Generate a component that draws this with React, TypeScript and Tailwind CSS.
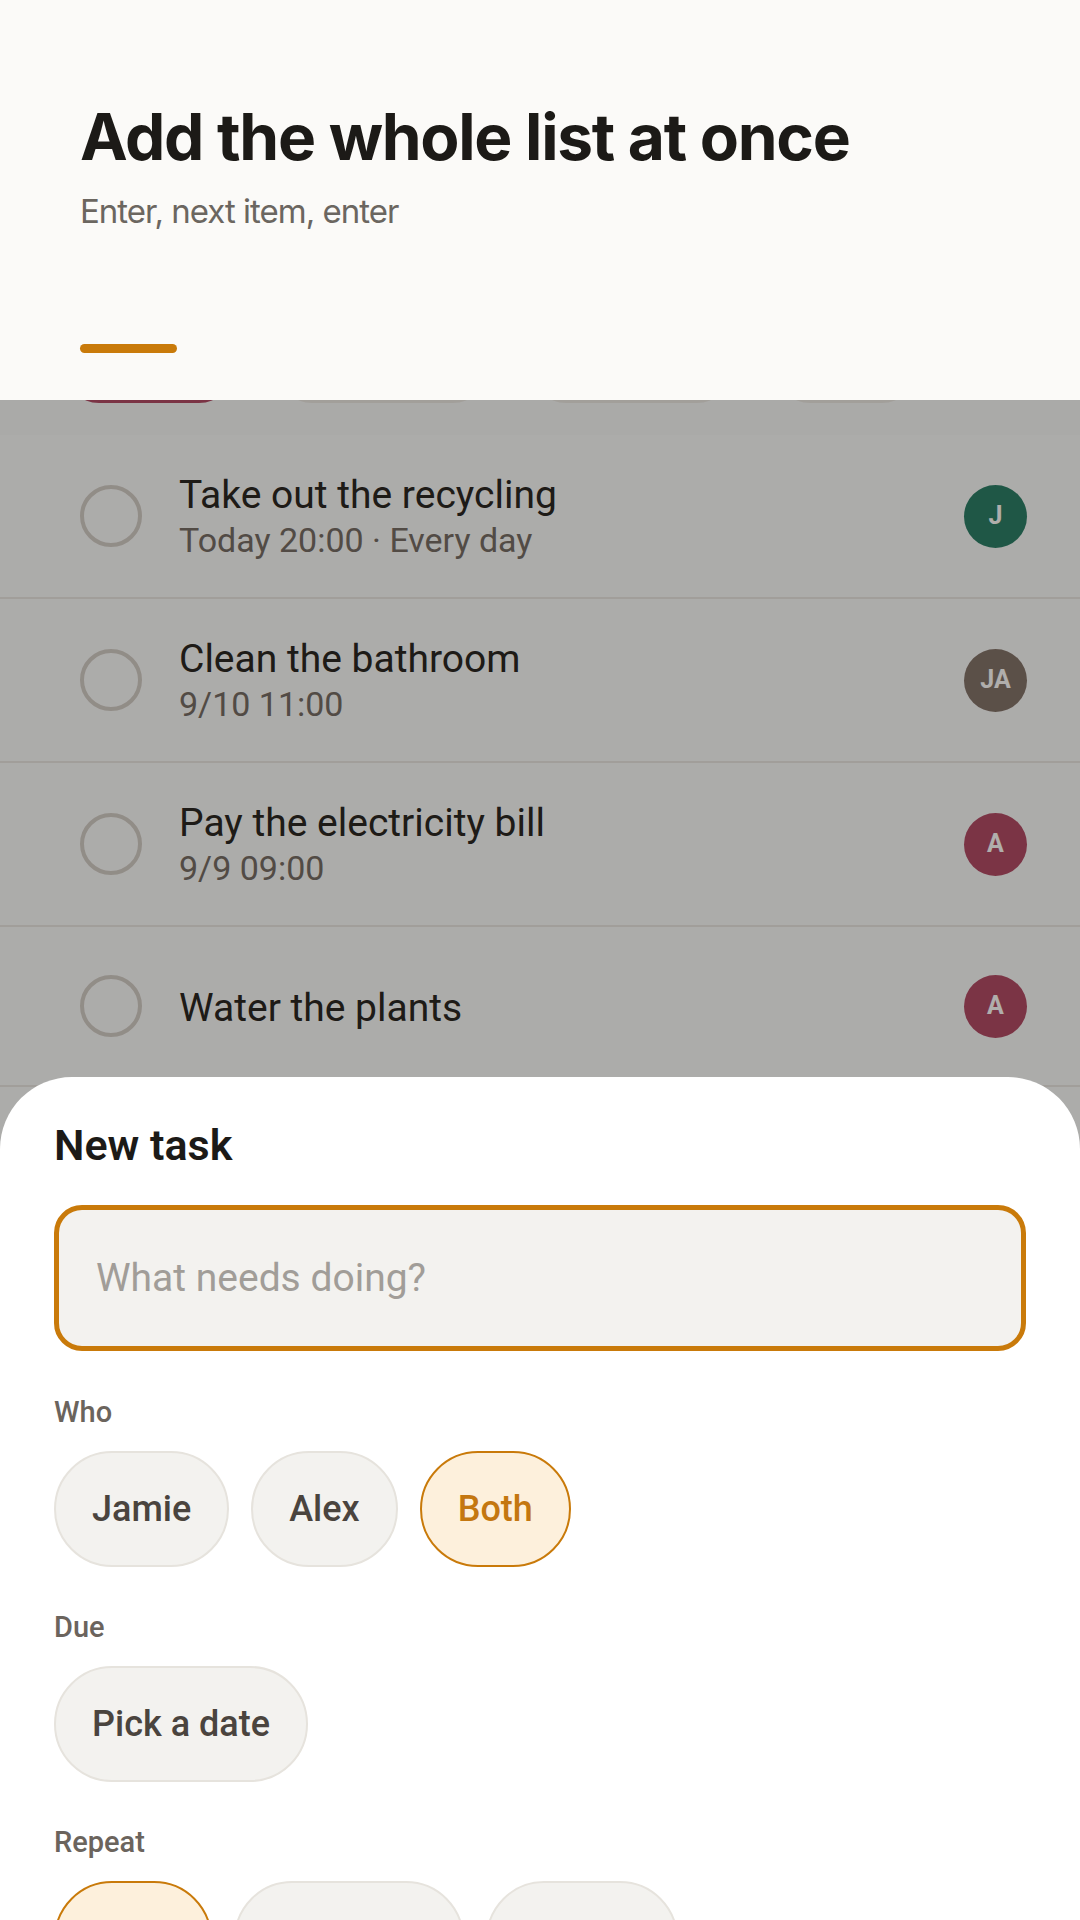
import React from "react";

interface Task {
  id: number;
  title: string;
  meta?: string;
  who: string;
  avatar: string;
}

const tasks: Task[] = [
  { id: 1, title: "Take out the recycling", meta: "Today 20:00 · Every day", who: "J", avatar: "bg-[#2e7f66]" },
  { id: 2, title: "Clean the bathroom", meta: "9/10 11:00", who: "JA", avatar: "bg-[#857469]" },
  { id: 3, title: "Pay the electricity bill", meta: "9/9 09:00", who: "A", avatar: "bg-[#b34c64]" },
  { id: 4, title: "Water the plants", who: "A", avatar: "bg-[#b34c64]" },
];

const filters = [
  { label: "All", cls: "w-[168px] bg-[#b34c64]" },
  { label: "Jamie", cls: "w-[209px] bg-[#ebe7e0]" },
  { label: "Alex", cls: "w-[199px] bg-[#ebe7e0]" },
  { label: "Done", cls: "w-[140px] bg-[#ebe7e0]" },
];

// opciones de repetir: quedan bajo el borde de la pantalla, solo se ve la parte de arriba
const repeatOptions = [
  { label: "None", cls: "w-[158px]", selected: true },
  { label: "Every day", cls: "w-[230px]", selected: false },
  { label: "Weekly", cls: "w-[192px]", selected: false },
];

function Chip({ label, selected }: { label: string; selected?: boolean }) {
  return (
    <button
      className={
        selected
          ? "h-[116px] px-[36px] rounded-full border-2 border-[#c97a0a] bg-[#fdf0dc] text-[#c47710] text-[36px] font-medium leading-none"
          : "h-[116px] px-[36px] rounded-full border-2 border-[#e6e3dd] bg-[#f3f2ef] text-[#4a443e] text-[36px] font-medium leading-none"
      }
    >
      {label}
    </button>
  );
}

function Section({ label, children }: { label: string; children: React.ReactNode }) {
  return (
    <div className="flex flex-col gap-[21px]">
      <div className="text-[29px] leading-[36px] font-medium text-[#6b645d]">{label}</div>
      <div className="flex gap-[22px]">{children}</div>
    </div>
  );
}

export default function App() {
  return (
    <div className="relative w-[1080px] h-[1920px] overflow-hidden bg-[#faf9f7] font-['Roboto',sans-serif]">
      {/* contenido de fondo */}
      <div className="h-[435px] flex items-end gap-[45px] pl-[65px] pb-[32px] bg-[#f7f6f4]">
        {filters.map((f) => (
          <div key={f.label} className={`h-[68px] rounded-full ${f.cls}`} />
        ))}
      </div>
      <div className="flex flex-col">
        {tasks.map((t) => (
          <div
            key={t.id}
            className={`${t.meta ? "h-[164px]" : "h-[160px]"} flex items-center pl-[80px] pr-[53px] border-b-2 border-[#e9e5df]`}
          >
            <div className="w-[62px] h-[62px] rounded-full border-[4px] border-[#d3ccc4] shrink-0" />
            <div className="flex-1 ml-[37px] pt-[4px] flex flex-col">
              <span className="text-[39px] leading-[43px] text-[#2c2822]">{t.title}</span>
              {t.meta && <span className="text-[34px] leading-[46px] text-[#776d64]">{t.meta}</span>}
            </div>
            <div
              className={`w-[63px] h-[63px] rounded-full ${t.avatar} flex items-center justify-center text-[#fffdf9] text-[25px] font-bold`}
            >
              {t.who}
            </div>
          </div>
        ))}
      </div>

      {/* scrim */}
      <div className="absolute inset-0 bg-black/[0.31]" />

      {/* tip del onboarding */}
      <div className="absolute top-0 left-0 right-0 h-[400px] bg-[#fbfaf8] pl-[80px] pt-[105px] font-['Inter',sans-serif]">
        <h1 className="text-[64px] leading-[64px] font-bold tracking-[-0.02em] text-[#1c1a17]">Add the whole list at once</h1>
        <p className="mt-[26px] text-[33px] leading-[33px] tracking-[-0.03em] text-[#6b6660]">Enter, next item, enter</p>
        <div className="mt-[116px] w-[97px] h-[9px] rounded-full bg-[#c97a0a]" />
      </div>

      {/* hoja nueva tarea */}
      <div className="absolute top-[1077px] left-0 right-0 bg-white rounded-t-[72px] px-[54px] pt-[43px] pb-[60px]">
        <h2 className="text-[43px] leading-[50px] font-semibold text-[#1c1a17]">New task</h2>
        <div className="mt-[35px] h-[146px] rounded-[28px] border-[5px] border-[#c97a0a] bg-[#f3f2ef] flex items-center px-[37px]">
          <input
            className="w-full bg-transparent outline-none text-[39px] text-[#2c2822] placeholder:text-[#a19d98]"
            placeholder="What needs doing?"
          />
        </div>
        <div className="mt-[43px] flex flex-col gap-[42px]">
          <Section label="Who">
            <Chip label="Jamie" />
            <Chip label="Alex" />
            <Chip label="Both" selected />
          </Section>
          <Section label="Due">
            <Chip label="Pick a date" />
          </Section>
          <Section label="Repeat">
            {repeatOptions.map((o) => (
              <button
                key={o.label}
                aria-label={o.label}
                className={
                  o.selected
                    ? `${o.cls} h-[116px] rounded-full border-2 border-[#c97a0a] bg-[#fdf0dc]`
                    : `${o.cls} h-[116px] rounded-full border-2 border-[#e6e3dd] bg-[#f3f2ef]`
                }
              />
            ))}
          </Section>
        </div>
      </div>
    </div>
  );
}
